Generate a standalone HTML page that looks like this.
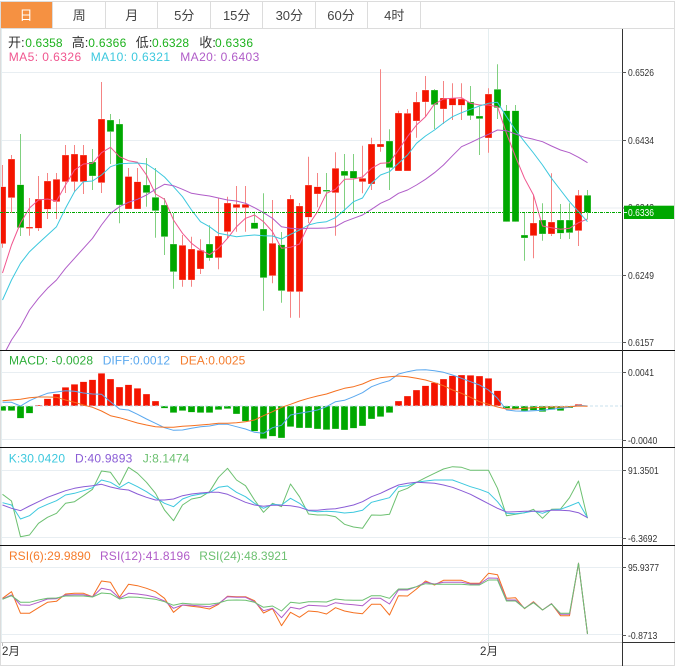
<!DOCTYPE html>
<html><head><meta charset="utf-8"><title>K线</title>
<style>
html,body{margin:0;padding:0;background:#fff;width:676px;height:672px;overflow:hidden}
svg{display:block}
text{font-family:"Liberation Sans","Noto Sans CJK SC",sans-serif}
.l{fill:none;stroke-width:1;stroke-linejoin:round}
.y{font-size:10.5px;fill:#333}
.b{stroke:#fff;stroke-width:.3;paint-order:fill}
</style></head><body>
<svg width="676" height="672" viewBox="0 0 676 672" xmlns="http://www.w3.org/2000/svg">
<defs><clipPath id="c"><rect x="1" y="29" width="621" height="321"/></clipPath><clipPath id="t"><rect x="1" y="352" width="621" height="95"/></clipPath></defs>
<rect width="676" height="672" fill="#fff"/>
<!-- tabs -->
<rect x="1" y="2" width="51" height="26" fill="#f59142"/>
<path d="M0.5 1.5H674.5V665.5H0.5Z" fill="none" stroke="#dcdcdc"/>
<path d="M0 28.5H675M52.5 2V28M105.5 2V28M157.5 2V28M210.5 2V28M262.5 2V28M315.5 2V28M367.5 2V28M420.5 2V28" stroke="#dcdcdc" fill="none"/>
<g font-size="13" fill="#444" text-anchor="middle">
<text x="26" y="20" fill="#fff">日</text><text x="79.3" y="20">周</text><text x="131.7" y="20">月</text><text x="184.3" y="20">5分</text><text x="236.7" y="20">15分</text><text x="289.3" y="20">30分</text><text x="341" y="20">60分</text><text x="394.3" y="20">4时</text>
</g>
<!-- grid -->
<path d="M2 72.5H622M2 140.5H622M2 208H622M2 275.5H622M2 342.5H622M2 372.5H622M2 439.5H622M2 470.5H622M2 537.5H622M2 567.5H622M2 634.5H622" stroke="#e8eef2" fill="none"/>
<path d="M488.5 29V642M1.5 29V642" stroke="#e4eef0" fill="none"/>
<!-- legend -->
<g font-size="12">
<text x="8" y="47" font-size="13" fill="#333">开:</text><text x="25.3" y="47" fill="#1db21d" textLength="37.3">0.6358</text>
<text x="71.7" y="47" font-size="13" fill="#333">高:</text><text x="88.3" y="47" fill="#1db21d" textLength="38">0.6366</text>
<text x="135.7" y="47" font-size="13" fill="#333">低:</text><text x="152" y="47" fill="#1db21d" textLength="37">0.6328</text>
<text x="199.3" y="47" font-size="13" fill="#333">收:</text><text x="215" y="47" fill="#1db21d" textLength="38">0.6336</text>
<text x="8.7" y="61" fill="#f0568f" textLength="72.5">MA5: 0.6326</text>
<text x="90.7" y="61" fill="#3cc8de" textLength="79.3">MA10: 0.6321</text>
<text x="180.3" y="61" fill="#b05cc8" textLength="79">MA20: 0.6403</text>
<text x="9" y="364.5" fill="#2fae3a" textLength="84">MACD: -0.0028</text>
<text x="102.7" y="364.5" fill="#5aa8ef" textLength="67.3">DIFF:0.0012</text>
<text x="180" y="364.5" fill="#f57c2c" textLength="65.3">DEA:0.0025</text>
<text x="8.7" y="462.5" fill="#3cc8de" textLength="56.3">K:30.0420</text>
<text x="75" y="462.5" fill="#8a5cd6" textLength="57.3">D:40.9893</text>
<text x="142.7" y="462.5" fill="#6cc070" textLength="46.6">J:8.1474</text>
<text x="9" y="560" fill="#f57c2c" textLength="81.7">RSI(6):29.9890</text>
<text x="100" y="560" fill="#b05cc8" textLength="90">RSI(12):41.8196</text>
<text x="199.3" y="560" fill="#6cc070" textLength="88.4">RSI(24):48.3921</text>
</g>
<!-- candles -->
<g clip-path="url(#c)">
<path fill="none" stroke="#f58484" d="M2.5 165V247.7M11.5 155V213M29.5 198V235.7M38.5 176V231M47.5 173V219M56.5 173V219M65.5 145V193M74.5 145V191.7M83.5 145V194M101.5 82V193M128.5 168V209M137.5 168V209M182.5 235V286.7M191.5 236.7V286.7M200.5 239.3V274M218.5 198.3V269.3M227.5 196.7V238M236.5 186V231.7M245.5 186V231.7M272.5 200V283.3M290.5 195V317.7M299.5 203V317.7M308.5 156.7V223M317.5 173V207.3M335.5 152.3V235.7M362.5 145.7V193.3M371.5 137.7V190M380.5 69.3V151.7M398.5 110.7V171M407.5 109V171M416.5 92V137.7M425.5 76V116.7M443.5 81V124M452.5 83.3V120M461.5 83.3V120M488.5 88.3V152.7M533.5 195V258.3M551.5 173.3V236M578.5 190V246"/>
<path fill="none" stroke="#80d080" d="M20.5 134V236M92.5 149V190M110.5 114V164M119.5 119V223.3M146.5 158V206.7M155.5 168V237.7M164.5 198V255M173.5 213V288.7M209.5 225.3V260.7M254.5 211.7V229M263.5 193.3V310.7M281.5 232V302.7M326.5 173V212.7M344.5 154V211.7M353.5 154V211.7M389.5 129.3V190M434.5 89V129M470.5 86V120M479.5 106.7V155M497.5 64.3V119M506.5 105V221.7M515.5 105V221.7M524.5 213V260.7M542.5 203.3V240.7M560.5 204V239M569.5 203.3V239M587.5 190V219.3"/>
<path class="b" fill="#f41400" d="M-1 186.7h7v57h-7zM8 159h7v38.7h-7zM26 227h7v1.5h-7zM35 199h7v29.3h-7zM44 181h7v28.3h-7zM53 179.3h7v22.4h-7zM62 155h7v26.7h-7zM71 154h7v27.7h-7zM80 155h7v26.7h-7zM98 119h7v63.7h-7zM125 176.5h7v32.5h-7zM134 181.7h7v27.3h-7zM179 245.3h7v34.7h-7zM188 249h7v31h-7zM197 250.3h7v18.7h-7zM215 236h7v21.7h-7zM224 203h7v28.7h-7zM233 204.3h7v3.4h-7zM242 204.3h7v3.4h-7zM269 243.3h7v32.4h-7zM287 199h7v92.7h-7zM296 206h7v85.7h-7zM305 185h7v32.3h-7zM314 186.7h7v7.3h-7zM332 168.3h7v24.4h-7zM359 178.3h7v3.4h-7zM368 144h7v40h-7zM377 144h7v3h-7zM395 113h7v58h-7zM404 113.3h7v57.7h-7zM413 102h7v19h-7zM422 90h7v12h-7zM440 98h7v11h-7zM449 98h7v7.3h-7zM458 99h7v6.3h-7zM485 94h7v44h-7zM530 223h7v12.7h-7zM548 222h7v12h-7zM575 195.3h7v35.4h-7z"/>
<path class="b" fill="#00a800" d="M17 184.7h7v43h-7zM89 162h7v14h-7zM107 120h7v11.7h-7zM116 124h7v81h-7zM143 185h7v7.7h-7zM152 197.3h7v13.4h-7zM161 205h7v31.7h-7zM170 244h7v27.7h-7zM206 244h7v14h-7zM251 222.7h7v6h-7zM260 229h7v48.7h-7zM278 244.7h7v46h-7zM323 190h7v1.5h-7zM341 171h7v4.7h-7zM350 171h7v7.3h-7zM386 141h7v26.7h-7zM431 90h7v14.7h-7zM467 102h7v13.7h-7zM476 116h7v2.7h-7zM494 89.3h7v18.4h-7zM503 110.7h7v111h-7zM512 110.7h7v111h-7zM521 235h7v3h-7zM539 220h7v14h-7zM557 220h7v13.3h-7zM566 220h7v12.7h-7zM584 195.3h7v17h-7z"/>
<polyline class="l" stroke="#f0568f" points="2.5,273 11.5,245 20.5,223 29.5,208 38.5,200 47.5,199 56.5,201 65.5,185 74.5,170 83.5,164 92.5,163.3 101.5,152.7 110.5,147.3 119.5,156.7 128.5,160.7 137.5,162.3 146.5,175 155.5,194 164.5,199.3 173.5,220 182.5,233.3 191.5,243.3 200.5,250 209.5,254.7 218.5,248.3 227.5,238.3 236.5,226.7 245.5,218.3 254.5,215 263.5,221.7 272.5,231.7 281.5,248.3 290.5,247.3 299.5,244 308.5,225 317.5,211.7 326.5,193.3 335.5,189.3 344.5,179.3 353.5,179 362.5,177 371.5,168.3 380.5,163.3 389.5,162.7 398.5,150 407.5,136.7 416.5,125 425.5,116.7 434.5,104 443.5,99 452.5,98.3 461.5,97.7 470.5,103.3 479.5,105 488.5,105 497.5,106.7 506.5,133.3 515.5,156.7 524.5,178.3 533.5,195 542.5,226 551.5,227.7 560.5,229.3 569.5,228.3 578.5,222.7 587.5,219"/>
<polyline class="l" stroke="#3cc8de" points="2.5,300 11.5,280 20.5,263.3 29.5,251.7 38.5,243.3 47.5,235 56.5,226.7 65.5,208.3 74.5,191.7 83.5,181.7 92.5,181 101.5,175 110.5,166.7 119.5,163.7 128.5,163.3 137.5,163 146.5,164 155.5,170 164.5,177 173.5,186.7 182.5,196.7 191.5,210 200.5,221.7 209.5,226.7 218.5,233.3 227.5,235 236.5,236.7 245.5,235.7 254.5,235 263.5,235.7 272.5,236 281.5,239 290.5,234.3 299.5,230 308.5,225 317.5,222.7 326.5,221.7 335.5,217.7 344.5,210 353.5,201.7 362.5,198 371.5,183.3 380.5,175 389.5,171.7 398.5,163.3 407.5,155 416.5,143.3 425.5,136 434.5,130 443.5,123 452.5,116.7 461.5,112.7 470.5,109.3 479.5,106 488.5,103.3 497.5,102.3 506.5,116.7 515.5,130 524.5,141.7 533.5,153 542.5,165 551.5,178.3 560.5,190 569.5,201.7 578.5,211.7 587.5,221.7"/>
<polyline class="l" stroke="#b05cc8" points="2.5,357 11.5,340 20.5,326.7 29.5,310 38.5,298.3 47.5,288.3 56.5,280 65.5,268.3 74.5,258.3 83.5,248.3 92.5,238.3 101.5,225 110.5,213.3 119.5,206.7 128.5,202.3 137.5,199.3 146.5,195 155.5,189.3 164.5,184.3 173.5,185.7 182.5,189.3 191.5,193.3 200.5,194.7 209.5,196 218.5,198 227.5,200 236.5,201 245.5,203.3 254.5,207.7 263.5,212.7 272.5,218.3 281.5,226.7 290.5,228.3 299.5,229 308.5,228.3 317.5,228.3 326.5,228 335.5,226.7 344.5,221.7 353.5,218.3 362.5,215 371.5,209.3 380.5,203.3 389.5,199.3 398.5,193.3 407.5,190 416.5,185 425.5,179.3 434.5,172.7 443.5,165 452.5,155.7 461.5,146.7 470.5,142.7 479.5,138.3 488.5,134.3 497.5,130 506.5,130.7 515.5,134 524.5,137.3 533.5,139.3 542.5,141.7 551.5,146 560.5,150 569.5,152.7 578.5,157.3 587.5,162.7"/>
</g>
<path d="M0 212.5H624" stroke="#00a800" fill="none" stroke-dasharray="3 1 1 1"/>
<!-- MACD -->
<g clip-path="url(#t)">
<path class="b" fill="#f41400" d="M35 405h7v1h-7zM44 398.7h7v7.3h-7zM53 394h7v12h-7zM62 387.3h7v18.7h-7zM71 384.3h7v21.7h-7zM80 381.7h7v24.3h-7zM89 379.7h7v26.3h-7zM98 373.3h7v32.7h-7zM107 379h7v27h-7zM116 387h7v19h-7zM125 384.7h7v21.3h-7zM134 388.3h7v17.7h-7zM143 394h7v12h-7zM152 401h7v5h-7zM395 401h7v5h-7zM404 396h7v10h-7zM413 390h7v16h-7zM422 385.7h7v20.3h-7zM431 382.7h7v23.3h-7zM440 379h7v27h-7zM449 375.7h7v30.3h-7zM458 375h7v31h-7zM467 375.3h7v30.7h-7zM476 376h7v30h-7zM485 378.3h7v27.7h-7zM494 390.7h7v15.3h-7zM575 404.3h7v1.7h-7z"/>
<path class="b" fill="#00a800" d="M-1 406h7v4.7h-7zM8 406h7v4.7h-7zM17 406h7v12.3h-7zM26 406h7v7.3h-7zM161 406h7v2.3h-7zM170 406h7v6.7h-7zM179 406h7v4.7h-7zM188 406h7v6.3h-7zM197 406h7v6.7h-7zM206 406h7v6.7h-7zM215 406h7v3.7h-7zM224 406h7v2.7h-7zM233 406h7v8h-7zM242 406h7v15.3h-7zM251 406h7v25.3h-7zM260 406h7v32.7h-7zM269 406h7v30.3h-7zM278 406h7v32h-7zM287 406h7v20.7h-7zM296 406h7v22h-7zM305 406h7v22h-7zM314 406h7v23h-7zM323 406h7v23.7h-7zM332 406h7v23h-7zM341 406h7v24h-7zM350 406h7v22.3h-7zM359 406h7v20h-7zM368 406h7v13h-7zM377 406h7v10.7h-7zM386 406h7v6.7h-7zM503 406h7v2.3h-7zM512 406h7v3.3h-7zM521 406h7v5h-7zM530 406h7v4.3h-7zM539 406h7v5.7h-7zM548 406h7v3.7h-7zM557 406h7v4.7h-7zM566 406h7v2h-7z"/>
<path d="M0 406H622" stroke="#c8e0ee" stroke-width="1" stroke-dasharray="3 2" fill="none"/>
<polyline class="l" stroke="#5aa8ef" points="2.5,402.3 11.5,402.3 20.5,406 29.5,400.7 38.5,396.7 47.5,393.3 56.5,392 65.5,390.7 74.5,391.3 83.5,393 92.5,394 101.5,394.3 110.5,401.7 119.5,409 128.5,410 137.5,414.3 146.5,419 155.5,423.3 164.5,427.7 173.5,430.3 182.5,430 191.5,428.3 200.5,426.7 209.5,426 218.5,424.3 227.5,424.3 236.5,426.7 245.5,429 254.5,432.3 263.5,433.3 272.5,427.7 281.5,425.3 290.5,415 299.5,413.3 308.5,411.7 317.5,410 326.5,406.7 335.5,401.7 344.5,400.3 353.5,396.7 362.5,392.7 371.5,386.7 380.5,383.3 389.5,380.7 398.5,374 407.5,371.7 416.5,370 425.5,369.7 434.5,370.7 443.5,372.3 452.5,375 461.5,378.3 470.5,381.7 479.5,385 488.5,390 497.5,398.3 506.5,410 515.5,411 524.5,411.3 533.5,410.7 542.5,410.3 551.5,409.3 560.5,408.3 569.5,407.3 578.5,405.3 587.5,406"/>
<polyline class="l" stroke="#f57020" points="2.5,400.7 11.5,400 20.5,399.3 29.5,397.7 38.5,397 47.5,397 56.5,397.3 65.5,400 74.5,402.3 83.5,405 92.5,407.3 101.5,411 110.5,415.7 119.5,417.7 128.5,420.3 137.5,423 146.5,425 155.5,426.7 164.5,427.3 173.5,427.3 182.5,426.3 191.5,425.7 200.5,425 209.5,424.3 218.5,423.3 227.5,423.3 236.5,422.7 245.5,421.7 254.5,420 263.5,415.7 272.5,411.7 281.5,407.3 290.5,404.3 299.5,401 308.5,398.3 317.5,396 326.5,394 335.5,391 344.5,388.3 353.5,386.7 362.5,384 371.5,380 380.5,377.7 389.5,376.7 398.5,376 407.5,376.7 416.5,378.3 425.5,380 434.5,382.7 443.5,385.7 452.5,390 461.5,393.3 470.5,397.3 479.5,401.7 488.5,404.3 497.5,407 506.5,409 515.5,409 524.5,408.3 533.5,407.7 542.5,407.3 551.5,407 560.5,407 569.5,406.7 578.5,406 587.5,406.3"/>
</g>
<!-- KDJ -->
<polyline class="l" stroke="#6cc070" points="2.5,494.3 11.5,501 20.5,536.7 29.5,535 38.5,523.3 47.5,517.3 56.5,513.3 65.5,503.3 74.5,501.7 83.5,495.7 92.5,489.3 101.5,471 110.5,472.3 119.5,485 128.5,467.3 137.5,473.3 146.5,482.3 155.5,493.3 164.5,510 173.5,520.7 182.5,505 191.5,499 200.5,497.3 209.5,491.7 218.5,477.3 227.5,468.3 236.5,480 245.5,485.7 254.5,500 263.5,512.3 272.5,503.3 281.5,506.7 290.5,484 299.5,496.7 308.5,514 317.5,515 326.5,515 335.5,516.7 344.5,524.3 353.5,527 362.5,528.3 371.5,515 380.5,515.3 389.5,514.3 398.5,491.7 407.5,488.3 416.5,482.3 425.5,477.7 434.5,473.3 443.5,469 452.5,466.7 461.5,467.3 470.5,470.3 479.5,470.3 488.5,470.3 497.5,488.3 506.5,515.7 515.5,514.3 524.5,512.7 533.5,509.3 542.5,518.3 551.5,509.3 560.5,509 569.5,497.7 578.5,481 587.5,518.3"/>
<polyline class="l" stroke="#3cc8de" points="2.5,502.7 11.5,505 20.5,519 29.5,515.7 38.5,508.3 47.5,504.3 56.5,500.7 65.5,495 74.5,493.3 83.5,490.7 92.5,487.7 101.5,480 110.5,482.3 119.5,487.7 128.5,482.3 137.5,486.7 146.5,491.7 155.5,497.7 164.5,503.3 173.5,506.7 182.5,499 191.5,495.7 200.5,494 209.5,492.7 218.5,487.3 227.5,486 236.5,492.3 245.5,496.7 254.5,503.3 263.5,508.3 272.5,504.3 281.5,505 290.5,498.3 299.5,503.3 308.5,510.7 317.5,511.7 326.5,511.3 335.5,511.7 344.5,513 353.5,512.3 362.5,510.3 371.5,502.3 380.5,500 389.5,497.7 398.5,486.7 407.5,485.7 416.5,482.3 425.5,481 434.5,480 443.5,480 452.5,480 461.5,483.3 470.5,486.7 479.5,489.3 488.5,492.7 497.5,501.7 506.5,513.3 515.5,513.7 524.5,512.7 533.5,511 542.5,513.3 551.5,510 560.5,509.3 569.5,506 578.5,502.3 587.5,517.7"/>
<polyline class="l" stroke="#8a5cd6" points="2.5,505 11.5,508.3 20.5,510.7 29.5,506 38.5,501.7 47.5,497.3 56.5,494 65.5,490.7 74.5,488.3 83.5,486.7 92.5,485.7 101.5,484.3 110.5,487 119.5,489 128.5,490 137.5,494 146.5,497.3 155.5,500 164.5,500 173.5,499 182.5,495.7 191.5,494 200.5,493 209.5,492.3 218.5,492.3 227.5,494.3 236.5,498.3 245.5,502.3 254.5,505 263.5,506.3 272.5,505.3 281.5,505.3 290.5,505.7 299.5,507.3 308.5,510.3 317.5,510.3 326.5,509.3 335.5,508.7 344.5,507 353.5,505 362.5,501.7 371.5,496.7 380.5,493.3 389.5,489 398.5,485 407.5,483.3 416.5,482.3 425.5,482.7 434.5,483.3 443.5,485 452.5,487.3 461.5,490.7 470.5,494.3 479.5,499 488.5,503.7 497.5,508.3 506.5,512 515.5,511.7 524.5,511.3 533.5,511.3 542.5,511.3 551.5,510.3 560.5,510.3 569.5,510.7 578.5,512.7 587.5,517.7"/>
<!-- RSI -->
<polyline class="l" stroke="#f57020" points="2.5,598.3 11.5,591.7 20.5,613.3 29.5,613.3 38.5,607.7 47.5,602.3 56.5,601.3 65.5,594 74.5,593.3 83.5,593.3 92.5,596.7 101.5,581 110.5,582.3 119.5,597.3 128.5,584.3 137.5,585.7 146.5,588.3 155.5,591.7 164.5,598.3 173.5,612.3 182.5,605 191.5,606.3 200.5,607.3 209.5,609 218.5,604.3 227.5,596.3 236.5,596.7 245.5,596.7 254.5,600.7 263.5,613 272.5,608.7 281.5,625.7 290.5,612.3 299.5,617.3 308.5,611 317.5,611.7 326.5,614 335.5,607.7 344.5,611 353.5,612.7 362.5,613.7 371.5,604.3 380.5,604.3 389.5,615 398.5,595.7 407.5,596 416.5,589 425.5,581 434.5,585 443.5,580.3 452.5,580.3 461.5,580.3 470.5,583.3 479.5,583.3 488.5,573.3 497.5,574.7 506.5,598.3 515.5,597.7 524.5,608.7 533.5,601.7 542.5,610 551.5,603.7 560.5,615.7 569.5,615.7 578.5,563.3 587.5,634"/>
<polyline class="l" stroke="#b05cc8" points="2.5,599 11.5,595 20.5,605 29.5,605.3 38.5,602.3 47.5,599 56.5,598.7 65.5,595 74.5,594.7 83.5,594.7 92.5,596.7 101.5,588.3 110.5,590 119.5,598.3 128.5,593.3 137.5,594 146.5,595.3 155.5,597.3 164.5,601 173.5,608.3 182.5,605 191.5,605.3 200.5,606 209.5,606.7 218.5,603.7 227.5,596.7 236.5,597.3 245.5,597.3 254.5,601.7 263.5,610.7 272.5,608.3 281.5,617.7 290.5,607.3 299.5,609 308.5,605.3 317.5,605.7 326.5,606.3 335.5,602.7 344.5,604 353.5,604.7 362.5,605.7 371.5,598.3 380.5,598.3 389.5,604 398.5,590 407.5,590 416.5,586.7 425.5,582.3 434.5,584 443.5,582.3 452.5,582.3 461.5,582.3 470.5,584 479.5,584 488.5,578 497.5,578.3 506.5,600 515.5,600 524.5,608.3 533.5,602.3 542.5,610 551.5,603.7 560.5,614.3 569.5,614.3 578.5,563.3 587.5,634"/>
<polyline class="l" stroke="#6cc070" points="2.5,599.3 11.5,595.7 20.5,602.3 29.5,602.3 38.5,600 47.5,598.3 56.5,598 65.5,596 74.5,596 83.5,596 92.5,597 101.5,593 110.5,593.7 119.5,599 128.5,597 137.5,597.3 146.5,598.3 155.5,599.3 164.5,601.7 173.5,605.3 182.5,603.3 191.5,604 200.5,604.3 209.5,604.3 218.5,603 227.5,600.3 236.5,600 245.5,600.3 254.5,602.3 263.5,607.3 272.5,606 281.5,611 290.5,602.3 299.5,603.3 308.5,601.7 317.5,601.7 326.5,602 335.5,599 344.5,600 353.5,600.3 362.5,600.3 371.5,595.7 380.5,595.7 389.5,598.3 398.5,589 407.5,589 416.5,586.7 425.5,583.7 434.5,584.3 443.5,584.3 452.5,584.3 461.5,584.3 470.5,585 479.5,585 488.5,580 497.5,580 506.5,601 515.5,601 524.5,608.3 533.5,602.7 542.5,610 551.5,604 560.5,613.3 569.5,613.3 578.5,563.3 587.5,634"/>
<!-- frame -->
<path d="M0 350.5H675M0 447.5H675M0 545.5H675" stroke="#111" fill="none"/>
<path d="M1 642.5H622" stroke="#cfcfcf" fill="none"/>
<path d="M622 642.5H675" stroke="#333" fill="none"/>
<path d="M622.5 29V666" stroke="#333" fill="none"/>
<path d="M2.5 643V646M488.5 643V646" stroke="#bbb" fill="none"/>
<path d="M622 72.5h4M622 140.5h4M622 208h4M622 275.5h4M622 342.5h4M622 372.5h4M622 440.5h4M622 470.5h4M622 538.5h4M622 567.5h4M622 635.5h4" stroke="#555" fill="none"/>
<!-- y labels -->
<text class="y" x="628" y="76" textLength="26" lengthAdjust="spacingAndGlyphs">0.6526</text>
<text class="y" x="628" y="144" textLength="26" lengthAdjust="spacingAndGlyphs">0.6434</text>
<text class="y" x="628" y="211" textLength="26" lengthAdjust="spacingAndGlyphs">0.6342</text>
<text class="y" x="628" y="279" textLength="26" lengthAdjust="spacingAndGlyphs">0.6249</text>
<text class="y" x="628" y="346" textLength="26" lengthAdjust="spacingAndGlyphs">0.6157</text>
<text class="y" x="628" y="376" textLength="26" lengthAdjust="spacingAndGlyphs">0.0041</text>
<text class="y" x="628" y="444" textLength="29.3" lengthAdjust="spacingAndGlyphs">-0.0040</text>
<text class="y" x="628" y="474" textLength="30.7" lengthAdjust="spacingAndGlyphs">91.3501</text>
<text class="y" x="628" y="542" textLength="29.3" lengthAdjust="spacingAndGlyphs">-6.3692</text>
<text class="y" x="628" y="571" textLength="31" lengthAdjust="spacingAndGlyphs">95.9377</text>
<text class="y" x="628" y="639" textLength="29.3" lengthAdjust="spacingAndGlyphs">-0.8713</text>
<rect x="624" y="205.7" width="50" height="13.3" fill="#00a800"/>
<path d="M624 212.5h3" stroke="#cfe" fill="none"/>
<text x="628" y="216" font-size="10.5" fill="#fff" textLength="26" lengthAdjust="spacingAndGlyphs">0.6336</text>
<!-- x labels -->
<text x="2" y="655" font-size="11.5" fill="#333">2月</text>
<text x="489" y="655" font-size="11.5" fill="#333" text-anchor="middle">2月</text>
</svg>
</body></html>
